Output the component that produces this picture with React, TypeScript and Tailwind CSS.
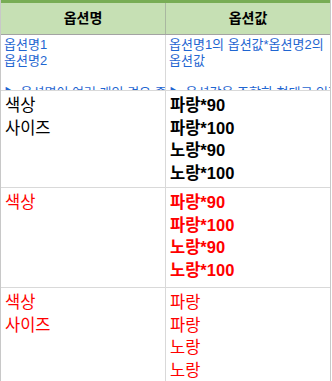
const font = "font-['Liberation_Sans','Noto_Sans_CJK_KR',sans-serif]";

type Row = {
  names: string[];
  values: string[];
  red?: boolean;
  boldValues?: boolean;
  height: string;
};

const rows: Row[] = [
  { names: ["색상", "사이즈"], values: ["파랑*90", "파랑*100", "노랑*90", "노랑*100"], boldValues: true, height: "h-[97px]" },
  { names: ["색상"], values: ["파랑*90", "파랑*100", "노랑*90", "노랑*100"], red: true, boldValues: true, height: "h-[100px]" },
  { names: ["색상", "사이즈"], values: ["파랑", "파랑", "노랑", "노랑"], red: true, height: "h-[100px]" },
];

export default function App() {
  return (
    <div className={`w-[331px] h-[381px] overflow-hidden bg-white border-x border-[#c8c8c8] ${font}`}>
      {/* header */}
      <div className="grid grid-cols-[165px_1fr] h-[35px] bg-[#c6e0b4] border-t-[3px] border-[#78ad55] border-b border-b-[#a3a3a3] text-[14px] font-bold text-black">
        <div className="flex items-center justify-center border-r border-[#a9b7a0]">옵션명</div>
        <div className="flex items-center justify-center">옵션값</div>
      </div>

      {/* guide row */}
      <div className="grid grid-cols-[165px_1fr] h-[56px] overflow-hidden border-b border-[#d9d9d9] text-[13px] leading-[16px] text-[#1f66d1]">
        <div className="border-r border-[#d9d9d9] pl-[3px] pt-[2px] whitespace-nowrap overflow-hidden">
          <p>옵션명1</p>
          <p>옵션명2</p>
          <p>&nbsp;</p>
          <p>▶ 옵션명이 여러 개인 경우 줄바꿈</p>
        </div>
        <div className="pl-[3px] pt-[2px] overflow-hidden">
          <p className="whitespace-nowrap">옵션명1의 옵션값*옵션명2의</p>
          <p>옵션값</p>
          <p>&nbsp;</p>
          <p className="whitespace-nowrap">▶ 옵션값을 조합한 형태로 입력</p>
        </div>
      </div>

      {rows.map((r, i) => (
        <div
          key={i}
          className={`grid grid-cols-[165px_1fr] ${r.height} border-b border-[#d9d9d9] text-[16.5px] leading-[22.5px] ${r.red ? "text-[#ff0000]" : "text-black"}`}
        >
          <div className="border-r border-[#d9d9d9] pl-[4px] pt-[3px]">
            {r.names.map((n, j) => (
              <p key={j}>{n}</p>
            ))}
          </div>
          <div className={`pl-[4px] pt-[3px] ${r.boldValues ? "font-bold" : ""}`}>
            {r.values.map((v, j) => (
              <p key={j}>{v}</p>
            ))}
          </div>
        </div>
      ))}
    </div>
  );
}
